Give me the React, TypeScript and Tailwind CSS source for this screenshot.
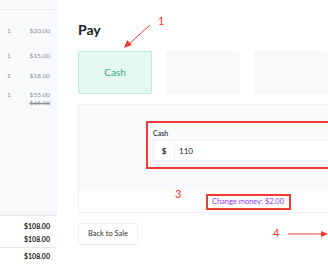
import React from "react";

const items = [
  { qty: 1, price: "$20.00", mt: "mt-[17px]" },
  { qty: 1, price: "$15.00", mt: "mt-[17px]" },
  { qty: 1, price: "$18.00", mt: "mt-[12px]" },
  { qty: 1, price: "$55.00", old: "$65.00", mt: "mt-[11px]" },
];

export default function App() {
  return (
    <div
      className="relative flex h-[264px] w-[328px] overflow-hidden bg-white text-[#222]"
      style={{ fontFamily: "Lato, 'Open Sans', sans-serif" }}
    >
      {/* order summary */}
      <aside className="flex h-full w-[57px] shrink-0 flex-col bg-[#f8f9fb] text-[6.5px] text-[#8a8f99]">
        <div className="h-[10px] border-b border-[#eceef2]" />
        {items.map((it, i) => (
          <div key={i} className={`flex items-start justify-between pl-[7px] pr-[7px] ${it.mt}`}>
            <span className="leading-[8px]">{it.qty}</span>
            <div className="flex flex-col items-end leading-[8px]">
              <span>{it.price}</span>
              {it.old && <span className="line-through">{it.old}</span>}
            </div>
          </div>
        ))}
        <div className="flex-1" />
        <div className="border-t border-[#e6e8ec] bg-white text-[7px] font-bold text-[#222]">
          <div className="flex h-[15px] items-end justify-end pr-[7px]">$108.00</div>
          <div className="flex h-[16px] items-center justify-end pr-[7px]">$108.00</div>
          <div className="flex h-[17px] items-center justify-end border-t border-[#e6e8ec] pr-[7px]">$108.00</div>
        </div>
      </aside>

      {/* payment */}
      <main className="w-[340px] shrink-0 pl-[21px] pt-[20px]">
        <h1 className="h-[20px] text-[14px] font-bold leading-[20px] text-[#1d1d1f]">Pay</h1>
        <div className="mt-[11px] flex gap-[14px]">
          <div className="flex h-[43px] w-[74px] items-center justify-center rounded-[2px] border border-[#bfeadb] bg-[#e5f7f1] text-[10px] text-[#3aa886]">
            Cash
          </div>
          <div className="h-[43px] w-[74px] rounded-[2px] bg-[#f7f8fa]" />
          <div className="h-[43px] w-[74px] rounded-[2px] bg-[#f7f8fa]" />
        </div>

        <div className="mt-[10px] w-[340px] border border-[#eef0f3]">
          <div className="flex h-[86px] justify-center bg-[#f8f9fb] pt-[16px]">
            <div className="h-[48px] w-[204px] border-2 border-[#f03a33] px-[5px] pt-[5px]">
              <div className="text-[7px] font-semibold leading-[10px] text-[#333]">Cash</div>
              <div className="mt-[2px] flex h-[21px] border border-[#eef0f3] bg-white text-[8px] text-[#222]">
                <div className="flex w-[21px] items-center justify-center border-r border-[#eef0f3] font-bold">$</div>
                <div className="flex items-center pl-[4px]">110</div>
              </div>
            </div>
          </div>
          <div className="flex h-[21px] items-center justify-center bg-white">
            <div className="flex h-[16px] w-[85px] items-center justify-center border-2 border-[#f03a33] text-[7.5px] text-[#9038f5]">
              Change money: $2.00
            </div>
          </div>
        </div>

        <button className="mt-[10px] flex h-[22px] w-[60px] items-center justify-center rounded-[2px] border border-[#eceef1] bg-white text-[7.5px] text-[#333]">
          Back to Sale
        </button>
      </main>

      {/* annotations */}
      <span className="absolute left-[158px] top-[14px] text-[11px] leading-[14px] text-[#f03a33]">1</span>
      <span className="absolute left-[175px] top-[187px] text-[11px] leading-[14px] text-[#f03a33]">3</span>
      <span className="absolute left-[273px] top-[226px] text-[11px] leading-[14px] text-[#f03a33]">4</span>
      <svg className="absolute left-0 top-0" width="328" height="264" viewBox="0 0 328 264">
        <line x1="150" y1="25" x2="129" y2="44" stroke="#f03a33" strokeWidth="1" />
        <polygon points="124,48 127,40 132,45" fill="#f03a33" />
        <line x1="288" y1="234" x2="322" y2="234" stroke="#f03a33" strokeWidth="1" />
        <polygon points="328,234 321,231 321,237" fill="#f03a33" />
      </svg>
    </div>
  );
}
